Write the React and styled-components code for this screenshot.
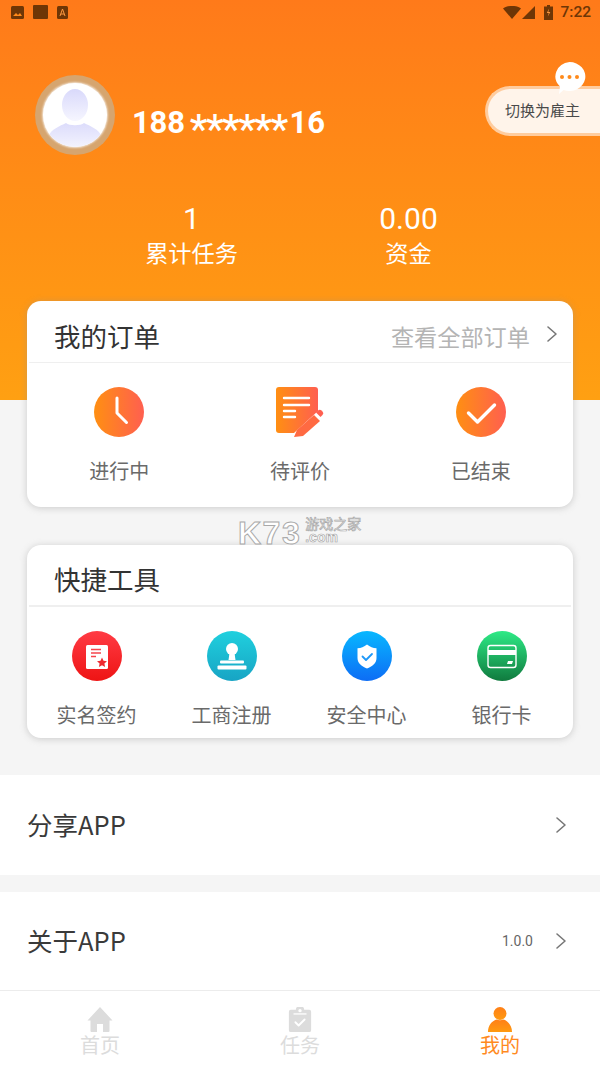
import React from 'react';
import styled, { createGlobalStyle } from 'styled-components';

const Global = createGlobalStyle`
  html, body { margin: 0; padding: 0; background: #f5f5f5; }
  body { font-family: "Noto Sans CJK SC", "Noto Sans", sans-serif; }
  * { box-sizing: border-box; }
`;

const Page = styled.div`
  position: relative;
  width: 600px;
  height: 1067px;
  overflow: hidden;
  background: #f5f5f5;
  display: flex;
  flex-direction: column;
`;
const Header = styled.header`
  height: 400px;
  flex: none;
  background: linear-gradient(180deg, #ff7a1a 0%, #ff8c16 45%, #ffa012 100%);
`;
const StatusBar = styled.div`
  height: 24px;
  display: flex;
  align-items: center;
  padding: 0 9px 0 11px;
  color: #6e3606;
`;
const StatusLeft = styled.div`
  display: flex;
  align-items: center;
  gap: 9px;
`;
const StatusRight = styled.div`
  margin-left: auto;
  display: flex;
  align-items: center;
  gap: 1px;
`;
const BatteryGlyph = styled.svg`
  margin-left: 8px;
`;
const Clock = styled.span`
  font: 500 15.5px/24px Roboto, sans-serif;
  margin-left: 6px;
`;
const Profile = styled.div`
  display: flex;
  align-items: flex-start;
  margin-top: 51px;
  padding-left: 35px;
  height: 80px;
`;
const Avatar = styled.div`
  width: 80px;
  height: 80px;
  flex: none;
  border-radius: 50%;
  background: #d6a56f;
  padding: 8px;
`;
const AvatarFace = styled.div`
  width: 64px;
  height: 64px;
  border-radius: 50%;
  background: #fff;
  overflow: hidden;
  box-shadow: 0 0 2px 1px rgba(255,255,255,.7);
  svg { display: block; }
`;
const Phone = styled.div`
  margin: 27px 0 0 17px;
  color: #fff;
  font: 700 31px/42px Roboto, sans-serif;
  letter-spacing: -0.200px;
  white-space: nowrap;
`;
const Stars = styled.span`
  font: 500 40px/0 Roboto, sans-serif;
  letter-spacing: -1.600px;
  margin: 0 3px 0 5px;
  vertical-align: -10px;
`;
const SwitchPill = styled.div`
  position: relative;
  margin: 11px 0 0 auto;
  width: 115px;
  height: 50px;
  border: 3px solid #ffcc9e;
  border-right: 0;
  border-radius: 25px 0 0 25px;
  background: #fff4ea;
  padding-left: 17px;
  color: #4a4a4a;
  font-size: 15px;
  line-height: 42px;
  white-space: nowrap;
`;
const Bubble = styled.svg`
  position: absolute;
  left: 65px;
  top: -27px;
`;
const Stats = styled.div`
  display: grid;
  grid-template-columns: 217px 217px;
  padding-left: 83px;
  margin-top: 44px;
  color: #fff;
  text-align: center;
`;
const StatValue = styled.div`
  font: 400 30px/40px Roboto, sans-serif;
`;
const StatLabel = styled.div`
  font-size: 23.200px;
  line-height: 30px;
  margin-top: -2px;
`;
const Cards = styled.div`
  margin-top: -99px;
  padding: 0 27px;
  display: flex;
  flex-direction: column;
  gap: 38px;
  position: relative;
`;
const Card = styled.section`
  position: relative;
  background: #fff;
  border-radius: 14px;
  box-shadow: 0 1px 7px rgba(150,150,150,.45);
  padding-bottom: ${p => p.$bottom}px;
`;
const CardHead = styled.div`
  height: 62px;
  margin: 0 2px;
  padding: 8px 2px 0 26px;
  border-bottom: ${p => p.$thick}px solid #efefef;
  display: flex;
  align-items: center;
`;
const CardTitle = styled.h2`
  margin: 0 0 0 -1px;
  font-size: 26.500px;
  font-weight: 400;
  color: #333;
  line-height: 36px;
`;
const CardMore = styled.div`
  margin-left: auto;
  display: flex;
  align-items: center;
  gap: 16px;
  padding-right: 11px;
  font-size: 23.200px;
  color: #b4b4b4;
  svg { margin-top: -3px; }
`;
const ItemGrid = styled.div`
  display: grid;
  grid-template-columns: repeat(${p => p.$cols}, 1fr);
  padding: 24px ${p => p.$right}px 0 2px;
`;
const Item = styled.div`
  display: flex;
  flex-direction: column;
  align-items: center;
  gap: 20px;
  svg { display: block; }
`;
const ItemLabel = styled.span`
  font-size: 20px;
  line-height: 28px;
  color: #6a6a6a;
  white-space: nowrap;
`;
const Watermark = styled.div`
  position: absolute;
  left: 211px;
  top: -24px;
  display: flex;
  gap: 4px;
  pointer-events: none;
`;
const WmBig = styled.span`
  font: 700 32px/25px "Liberation Sans", sans-serif;
  color: #fff;
  -webkit-text-stroke: 1px #a9a9a9;
  letter-spacing: 1.500px;
`;
const WmSmall = styled.div`
  color: #fff;
  -webkit-text-stroke: 0.7px #a9a9a9;
  font-size: 14px;
  line-height: 15px;
  margin-top: -5px;
  white-space: nowrap;
`;
const WmCom = styled.div`
  font: 700 14px/13px "Liberation Sans", sans-serif;
`;
const MenuList = styled.div`
  margin-top: 37px;
  display: flex;
  flex-direction: column;
  gap: 17px;
`;
const MenuRow = styled.div`
  height: ${p => p.$h}px;
  background: #fff;
  display: flex;
  align-items: center;
  padding: 0 33px 0 27px;
  color: #3a3a3a;
`;
const MenuLabel = styled.span`
  font-size: 25.500px;
  line-height: 34px;
  margin-top: -3px;
`;
const MenuVersion = styled.span`
  margin-left: auto;
  margin-right: 22px;
  font: 400 14px/20px Roboto, sans-serif;
  color: #666;
`;
const MenuChevron = styled.span`
  margin-left: ${p => (p.$auto ? 'auto' : '0')};
  display: flex;
`;
const TabBar = styled.nav`
  height: 77px;
  background: #fff;
  border-top: 1px solid #ececec;
  display: grid;
  grid-template-columns: repeat(3, 200px);
  position: absolute;
  left: 0;
  right: 0;
  bottom: 0;
`;
const Tab = styled.div`
  display: flex;
  flex-direction: column;
  align-items: center;
  padding-top: 16px;
  font-size: 20px;
  line-height: 28px;
  color: ${p => (p.$active ? '#ff8a1e' : '#dcdcdc')};
  svg { display: block; margin-bottom: -1px; }
`;

const Chevron = ({ color = '#777' }) => (
  <svg width="12" height="18" viewBox="0 0 12 18" fill="none">
    <path d="M2 2l8 7-8 7" stroke={color} strokeWidth="1.6" strokeLinecap="round" strokeLinejoin="round" />
  </svg>
);

const OrangeGrad = ({ id }) => (
  <defs>
    <linearGradient id={id} x1="0" y1="0" x2="1" y2="0">
      <stop offset="0" stopColor="#ff8f12" />
      <stop offset="1" stopColor="#ff5f50" />
    </linearGradient>
  </defs>
);

const VGrad = ({ id, a, b }) => (
  <defs>
    <linearGradient id={id} x1="0" y1="0" x2="0" y2="1">
      <stop offset="0" stopColor={a} />
      <stop offset="1" stopColor={b} />
    </linearGradient>
  </defs>
);

const ClockIcon = () => (
  <svg width="50" height="50" viewBox="0 0 50 50">
    <OrangeGrad id="g1" />
    <circle cx="25" cy="25" r="25" fill="url(#g1)" />
    <path d="M23 11v15l9.500 9.500" fill="none" stroke="#fff" strokeWidth="3" strokeLinecap="round" strokeLinejoin="round" />
  </svg>
);
const NoteIcon = () => (
  <svg width="50" height="50" viewBox="0 0 50 50">
    <OrangeGrad id="g2" />
    <path d="M4 0h36a3 3 0 0 1 3 3v21L19 46H4a3 3 0 0 1-3-3V3a3 3 0 0 1 3-3z" fill="url(#g2)" />
    <g stroke="#fff" strokeWidth="2.400" strokeLinecap="round">
      <path d="M9 11h25M9 18h25M9 24h11M9 30h11" />
    </g>
    <path d="M19 50l3-7 17-15 6 6-17 15z" fill="#ff6a42" />
    <path d="M41 25.500l2-2a2.500 2.500 0 0 1 3.500 0l1 1a2.500 2.500 0 0 1 0 3.500l-2 2z" fill="#ff5f50" />
  </svg>
);
const CheckIcon = () => (
  <svg width="50" height="50" viewBox="0 0 50 50">
    <OrangeGrad id="g3" />
    <circle cx="25" cy="25" r="25" fill="url(#g3)" />
    <path d="M12.500 26l9 9 17-17" fill="none" stroke="#fff" strokeWidth="3.400" strokeLinecap="round" strokeLinejoin="round" />
  </svg>
);
const ContractIcon = () => (
  <svg width="50" height="50" viewBox="0 0 50 50">
    <VGrad id="t1" a="#ff3b44" b="#ee1414" />
    <circle cx="25" cy="25" r="25" fill="url(#t1)" />
    <rect x="14" y="14" width="22" height="24" rx="1.500" fill="#fff" />
    <path d="M19 18.500h10M19 22h10M19 25.500h5" stroke="#f5444b" strokeWidth="1.600" />
    <path d="M30 26.500l1.500 3.300 3.500.4-2.600 2.400.7 3.500-3.100-1.800-3.100 1.800.7-3.500-2.600-2.400 3.500-.4z" fill="#ee2a30" />
  </svg>
);
const StampIcon = () => (
  <svg width="50" height="50" viewBox="0 0 50 50">
    <VGrad id="t2" a="#20d0de" b="#17a4c4" />
    <circle cx="25" cy="25" r="25" fill="url(#t2)" />
    <circle cx="25" cy="18" r="6" fill="#fff" />
    <path d="M22.500 22h5l1 7h-7z" fill="#fff" />
    <rect x="13" y="29.500" width="24" height="3" rx="1" fill="#fff" />
    <rect x="10.500" y="34.500" width="29" height="4" rx="1" fill="#fff" />
  </svg>
);
const ShieldIcon = () => (
  <svg width="50" height="50" viewBox="0 0 50 50">
    <VGrad id="t3" a="#08b8ff" b="#0d6df5" />
    <circle cx="25" cy="25" r="25" fill="url(#t3)" />
    <path d="M25 13.500c3 2.500 6 3.500 9.500 3.800v9.700c0 5.500-4.500 8.500-9.500 10.500-5-2-9.500-5-9.500-10.500v-9.700c3.500-.3 6.500-1.300 9.500-3.800z" fill="#fff" />
    <path d="M20.500 25.500l3.500 3.500 6-6" fill="none" stroke="#1e98f8" strokeWidth="1.800" strokeLinecap="round" strokeLinejoin="round" />
  </svg>
);
const BankIcon = () => (
  <svg width="50" height="50" viewBox="0 0 50 50">
    <VGrad id="t4" a="#2eea86" b="#107a3e" />
    <circle cx="25" cy="25" r="25" fill="url(#t4)" />
    <rect x="11" y="14.500" width="28" height="22" rx="2.500" fill="none" stroke="#fff" strokeWidth="1.400" />
    <rect x="11" y="19" width="28" height="5" fill="#fff" />
    <path d="M31 30h5l-1 3h-5z" fill="#fff" />
  </svg>
);
const HomeIcon = () => (
  <svg width="26" height="25" viewBox="0 0 26 25">
    <path d="M13 0l12.500 13.500h-3V24a1 1 0 0 1-1 1H16v-8h-6v8H4.500a1 1 0 0 1-1-1V13.500H.5z" fill="#dcdcdc" />
  </svg>
);
const TaskIcon = () => (
  <svg width="26" height="25" viewBox="0 0 26 27">
    <path d="M3 3h5.500a4.500 4.500 0 0 1 9 0H23a2 2 0 0 1 2 2v20a2 2 0 0 1-2 2H3a2 2 0 0 1-2-2V5a2 2 0 0 1 2-2z" fill="#dcdcdc" />
    <circle cx="13" cy="4" r="1.800" fill="#fff" />
    <path d="M6 7.500h14" stroke="#fff" strokeWidth="1.400" />
    <path d="M8 16.500l3.500 3.500 6.500-6.500" fill="none" stroke="#fff" strokeWidth="2" strokeLinecap="round" strokeLinejoin="round" />
  </svg>
);
const UserIcon = () => (
  <svg width="26" height="25" viewBox="0 0 26 27">
    <VGrad id="u1" a="#ff7f17" b="#ff9a10" />
    <ellipse cx="13" cy="7" rx="7" ry="7" fill="url(#u1)" />
    <path d="M0 27c0-7 4.500-12 9-13.500 2.500 1 5.500 1 8 0C21.500 15 26 20 26 27z" fill="url(#u1)" />
  </svg>
);

const orders = [
  { label: '进行中', Icon: ClockIcon },
  { label: '待评价', Icon: NoteIcon },
  { label: '已结束', Icon: CheckIcon },
];
const tools = [
  { label: '实名签约', Icon: ContractIcon },
  { label: '工商注册', Icon: StampIcon },
  { label: '安全中心', Icon: ShieldIcon },
  { label: '银行卡', Icon: BankIcon },
];

export default function App() {
  return (
    <Page>
      <Global />
      <Header>
        <StatusBar>
          <StatusLeft>
            <svg width="13" height="13" viewBox="0 0 13 13"><rect width="13" height="13" rx="1.500" fill="#6e3606" /><path d="M2 10l3-3 2 2 2-2 2 3z" fill="#ff8a1a" /></svg>
            <svg width="15" height="14" viewBox="0 0 15 14"><rect width="15" height="14" rx="1" fill="#6e3606" /></svg>
            <svg width="11" height="13" viewBox="0 0 11 13"><rect width="11" height="13" rx="1.500" fill="#6e3606" /><path d="M3 10l2.500-7 2.500 7M4 8h3" fill="none" stroke="#ff9a40" strokeWidth="1" /></svg>
          </StatusLeft>
          <StatusRight>
            <svg width="18" height="13" viewBox="0 0 18 13"><path d="M0 2.500C5-1 13-1 18 2.500L9 13z" fill="#6e3606" /></svg>
            <svg width="13" height="13" viewBox="0 0 13 13"><path d="M13 0v13H0z" fill="#6e3606" /></svg>
            <BatteryGlyph width="9" height="15" viewBox="0 0 9 15"><path d="M3 0h3v1.500h3V15H0V1.500h3z" fill="#6e3606" /><path d="M5.200 3.500L2.800 8h2l-1 3.500 2.500-4.500h-2z" fill="#ff9a40" /></BatteryGlyph>
            <Clock>7:22</Clock>
          </StatusRight>
        </StatusBar>
        <Profile>
          <Avatar>
            <AvatarFace>
              <svg width="64" height="64" viewBox="0 0 64 64">
                <defs>
                  <linearGradient id="av" x1="0" y1="0" x2="0" y2="1">
                    <stop offset="0" stopColor="#d9d9fb" />
                    <stop offset="1" stopColor="#f6f6ff" />
                  </linearGradient>
                  <linearGradient id="av2" x1="0" y1="0" x2="0" y2="1">
                    <stop offset="0" stopColor="#dcdcfb" />
                    <stop offset="1" stopColor="#f3f3fe" />
                  </linearGradient>
                </defs>
                <ellipse cx="32" cy="22" rx="13" ry="16" fill="url(#av)" />
                <path d="M5 54c3-8 12-11 18-14 3 3 15 3 18 0 6 3 15 6 18 14-6 7-16 10-27 10S11 61 5 54z" fill="url(#av2)" />
              </svg>
            </AvatarFace>
          </Avatar>
          <Phone>188<Stars>******</Stars>16</Phone>
          <SwitchPill>
            切换为雇主
            <Bubble width="33" height="32" viewBox="0 0 33 32">
              <path d="M16.500 0a16 14.500 0 1 1-6 28L6 32l1-7.500A16 14.500 0 0 1 16.500 0z" fill="#fff" />
              <circle cx="9" cy="15" r="2" fill="#ff8a1a" />
              <circle cx="16.500" cy="15" r="2" fill="#ff8a1a" />
              <circle cx="24" cy="15" r="2" fill="#ff8a1a" />
            </Bubble>
          </SwitchPill>
        </Profile>
        <Stats>
          <div><StatValue>1</StatValue><StatLabel>累计任务</StatLabel></div>
          <div><StatValue>0.00</StatValue><StatLabel>资金</StatLabel></div>
        </Stats>
      </Header>
      <Cards>
        <Card $bottom={22}>
          <CardHead $thick={1}>
            <CardTitle>我的订单</CardTitle>
            <CardMore>查看全部订单<Chevron /></CardMore>
          </CardHead>
          <ItemGrid $cols={3} $right={2}>
            {orders.map(({ label, Icon }) => (
              <Item key={label}><Icon /><ItemLabel>{label}</ItemLabel></Item>
            ))}
          </ItemGrid>
        </Card>
        <Card $bottom={9}>
          <Watermark>
            <WmBig>K73</WmBig>
            <WmSmall>
              游戏之家
              <WmCom>.com</WmCom>
            </WmSmall>
          </Watermark>
          <CardHead $thick={2}>
            <CardTitle>快捷工具</CardTitle>
          </CardHead>
          <ItemGrid $cols={4} $right={4}>
            {tools.map(({ label, Icon }) => (
              <Item key={label}><Icon /><ItemLabel>{label}</ItemLabel></Item>
            ))}
          </ItemGrid>
        </Card>
      </Cards>
      <MenuList>
        <MenuRow $h={100}><MenuLabel>分享APP</MenuLabel><MenuChevron $auto><Chevron /></MenuChevron></MenuRow>
        <MenuRow $h={98}><MenuLabel>关于APP</MenuLabel><MenuVersion>1.0.0</MenuVersion><MenuChevron><Chevron /></MenuChevron></MenuRow>
      </MenuList>
      <TabBar>
        <Tab><HomeIcon />首页</Tab>
        <Tab><TaskIcon />任务</Tab>
        <Tab $active><UserIcon />我的</Tab>
      </TabBar>
    </Page>
  );
}
